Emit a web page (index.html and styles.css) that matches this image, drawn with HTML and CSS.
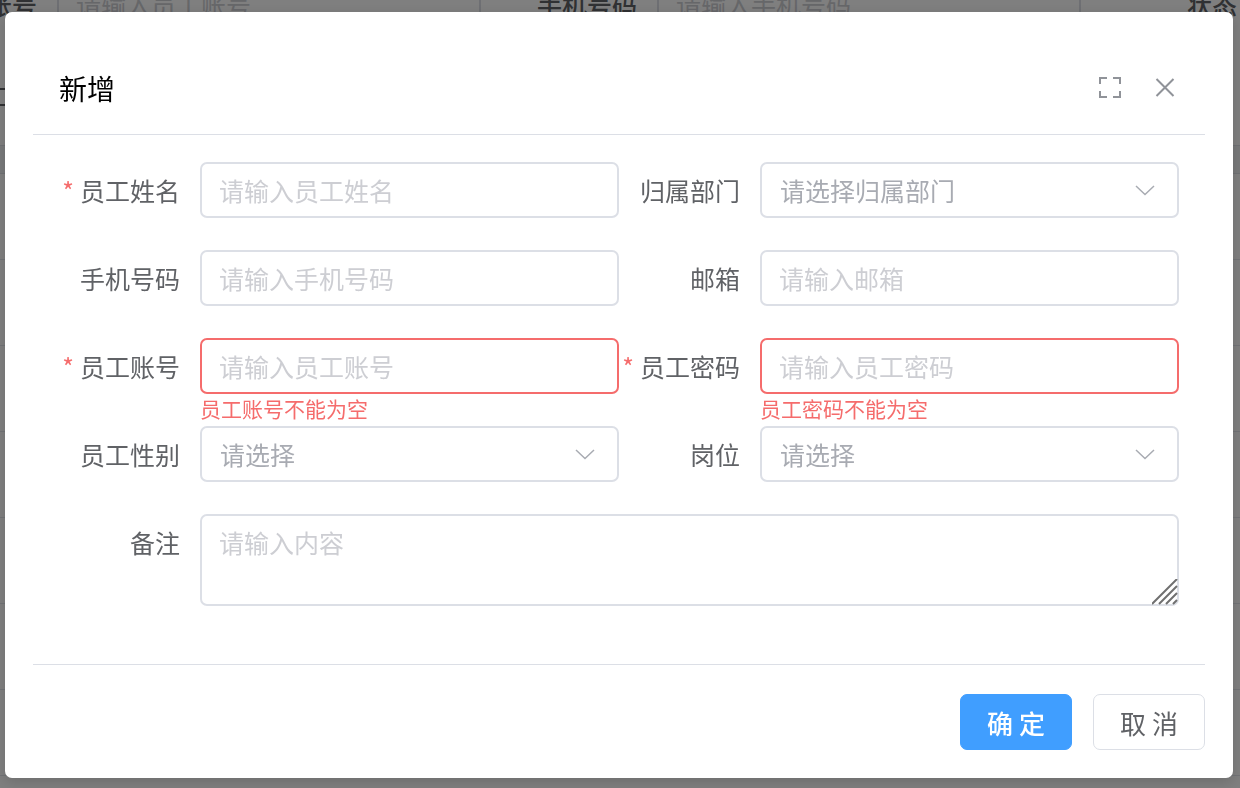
FILE: index.html
```html
<!DOCTYPE html>
<html lang="zh-CN">
<head>
    <meta charset="UTF-8">
    <meta name="viewport" content="width=device-width, initial-scale=1.0">
    <title>员工管理</title>
    <link rel="stylesheet" href="styles.css">
</head>
<body>

    <!-- 列表页 -->
    <div class="page">
        <form class="search">
            <label for="s-account">员工账号</label>
            <input type="text" id="s-account" placeholder="请输入员工账号">
            <label for="s-phone">手机号码</label>
            <input type="text" id="s-phone" placeholder="请输入手机号码">
            <span class="search-label">状态</span>
        </form>
        <div class="toolbar"><i class="tool"></i></div>
        <div class="list">
            <div class="list-head"></div>
            <div class="list-row"></div>
            <div class="list-row"></div>
            <div class="list-row"></div>
            <div class="list-row"></div>
            <div class="list-row"></div>
            <div class="list-row"></div>
            <div class="list-row"></div>
        </div>
    </div>

    <!-- 新增弹窗 -->
    <div class="overlay">
        <div class="dialog" role="dialog" aria-labelledby="dialog-title">
            <div class="dialog-header">
                <h2 id="dialog-title">新增</h2>
                <div class="dialog-tools">
                    <button type="button" class="icon-btn" aria-label="全屏">
                        <svg width="24" height="24" viewBox="0 0 24 24">
                            <path d="M2 9V3h7M15 3h7v6M22 16v6h-7M9 22H2v-6" fill="none" stroke="currentColor" stroke-width="2"/>
                        </svg>
                    </button>
                    <button type="button" class="icon-btn" aria-label="关闭">
                        <svg width="24" height="24" viewBox="0 0 24 24">
                            <path d="M3.500 4l17 17M20.500 4l-17 17" fill="none" stroke="currentColor" stroke-width="2"/>
                        </svg>
                    </button>
                </div>
            </div>

            <form class="form" id="user-form">
                <div class="item required">
                    <label for="name">员工姓名</label>
                    <div class="control">
                        <input type="text" id="name" placeholder="请输入员工姓名">
                    </div>
                </div>
                <div class="item">
                    <label for="dept">归属部门</label>
                    <div class="control select">
                        <select id="dept"><option>请选择归属部门</option></select>
                        <svg class="arrow" width="20" height="12" viewBox="0 0 20 12"><path d="M1 2l9 8.500L19 2" fill="none" stroke="currentColor" stroke-width="1.500"/></svg>
                    </div>
                </div>
                <div class="item">
                    <label for="phone">手机号码</label>
                    <div class="control">
                        <input type="text" id="phone" placeholder="请输入手机号码">
                    </div>
                </div>
                <div class="item">
                    <label for="email">邮箱</label>
                    <div class="control">
                        <input type="text" id="email" placeholder="请输入邮箱">
                    </div>
                </div>
                <div class="item required error">
                    <label for="account">员工账号</label>
                    <div class="control">
                        <input type="text" id="account" placeholder="请输入员工账号">
                        <p class="message">员工账号不能为空</p>
                    </div>
                </div>
                <div class="item required error">
                    <label for="password">员工密码</label>
                    <div class="control">
                        <input type="password" id="password" placeholder="请输入员工密码">
                        <p class="message">员工密码不能为空</p>
                    </div>
                </div>
                <div class="item">
                    <label for="gender">员工性别</label>
                    <div class="control select">
                        <select id="gender"><option>请选择</option></select>
                        <svg class="arrow" width="20" height="12" viewBox="0 0 20 12"><path d="M1 2l9 8.500L19 2" fill="none" stroke="currentColor" stroke-width="1.500"/></svg>
                    </div>
                </div>
                <div class="item">
                    <label for="post">岗位</label>
                    <div class="control select">
                        <select id="post"><option>请选择</option></select>
                        <svg class="arrow" width="20" height="12" viewBox="0 0 20 12"><path d="M1 2l9 8.500L19 2" fill="none" stroke="currentColor" stroke-width="1.500"/></svg>
                    </div>
                </div>
                <div class="item full">
                    <label for="remark">备注</label>
                    <div class="control">
                        <textarea id="remark" placeholder="请输入内容"></textarea>
                        <svg class="grip" width="26" height="26" viewBox="0 0 26 26"><path d="M0 25L25 0M7 25L25 7M14 25l11-11M21 25l4-4" fill="none" stroke="currentColor" stroke-width="2"/></svg>
                    </div>
                </div>
            </form>

            <div class="dialog-footer">
                <button type="submit" form="user-form" class="btn primary">确 定</button>
                <button type="button" class="btn">取 消</button>
            </div>
        </div>
    </div>

</body>
</html>
```

FILE: styles.css
```css
* {
    box-sizing: border-box;
}

body {
    margin: 0;
    height: 100vh;
    overflow: hidden;
    background: #fff;
    color: #606266;
    font-family: "Noto Sans CJK SC", sans-serif;
    font-size: 25px;
}

input, select, textarea, button {
    font: inherit;
}

/* 列表页 */
.page {
    margin: -24px 0 0 -64px;
}
.search {
    display: grid;
    grid-template-columns: 101px 444px 156px 444px 156px;
    align-items: center;
    height: 56px;
}
.search label, .search-label {
    text-align: right;
    font-weight: 500;
    white-space: nowrap;
}
.search input {
    margin-left: 20px;
    width: 424px;
}
.toolbar {
    height: 113px;
    padding: 56px 0 0 44px;
}
.tool {
    display: block;
    width: 28px;
    height: 18px;
    border: 2px solid #606266;
}
.list-head {
    height: 29px;
    background: #f0f2f5;
    border-top: 1px solid #dfe2e8;
    border-bottom: 1px solid #dfe2e8;
}
.list-row {
    height: 86px;
    border-bottom: 1px solid #e4e7ed;
}

/* 遮罩与弹窗 */
.overlay {
    position: fixed;
    inset: 0;
    padding: 12px 7px 10px 5px;
    background: rgba(0, 0, 0, 0.5);
}
.dialog {
    padding: 28px;
    background: #fff;
    border-radius: 7px;
    box-shadow: 0 4px 14px rgba(0, 0, 0, 0.15);
}
.dialog-header {
    display: flex;
    align-items: center;
    justify-content: space-between;
    height: 95px;
    padding: 0 28px 0 26px;
    border-bottom: 1px solid #dcdfe6;
}
.dialog-header h2 {
    margin: 0;
    padding-top: 2px;
    color: #000;
    font-size: 28px;
    font-weight: 400;
    line-height: 40px;
}
.dialog-tools {
    display: flex;
    gap: 31px;
}
.icon-btn {
    display: flex;
    padding: 0;
    border: 0;
    background: none;
    color: #909399;
}

/* 表单 */
.form {
    display: grid;
    grid-template-columns: 1fr 1fr;
    row-gap: 32px;
    padding: 27px 26px 58px;
}
.item {
    display: grid;
    grid-template-columns: 141px 1fr;
}
.item label {
    padding-right: 20px;
    text-align: right;
    line-height: 56px;
    white-space: nowrap;
}
.required label::before {
    content: "*";
    margin-right: 6px;
    color: #f56c6c;
}
.full {
    grid-column: 1 / -1;
}
.control {
    position: relative;
}
input, select, textarea {
    display: block;
    width: 100%;
    height: 56px;
    padding: 0 17px;
    border: 2px solid #dcdfe6;
    border-radius: 7px;
    outline: none;
    background: #fff;
}
::placeholder {
    color: #cdced3;
    opacity: 1;
}
select {
    padding: 0 18px;
    appearance: none;
    color: #a8abb2;
}
.arrow {
    position: absolute;
    top: 22px;
    right: 24px;
    color: #a8abb2;
    pointer-events: none;
}
textarea {
    height: 92px;
    padding: 7px 17px;
    line-height: 38px;
    resize: none;
}
.grip {
    position: absolute;
    right: 1px;
    bottom: 1px;
    color: #707070;
}
.error input {
    border-color: #f56c6c;
}
.message {
    position: absolute;
    top: 100%;
    left: 0;
    margin: 0;
    color: #f56c6c;
    font-size: 21px;
    line-height: 28px;
}

/* 底部按钮 */
.dialog-footer {
    display: flex;
    justify-content: flex-end;
    gap: 21px;
    padding-top: 29px;
    border-top: 1px solid #dcdfe6;
}
.btn {
    width: 112px;
    height: 56px;
    padding: 0;
    border: 1px solid #dcdfe6;
    border-radius: 7px;
    background: #fff;
    color: #606266;
    font-size: 26px;
}
.btn.primary {
    border-color: #409eff;
    background: #409eff;
    color: #fff;
    font-weight: 500;
}
```
